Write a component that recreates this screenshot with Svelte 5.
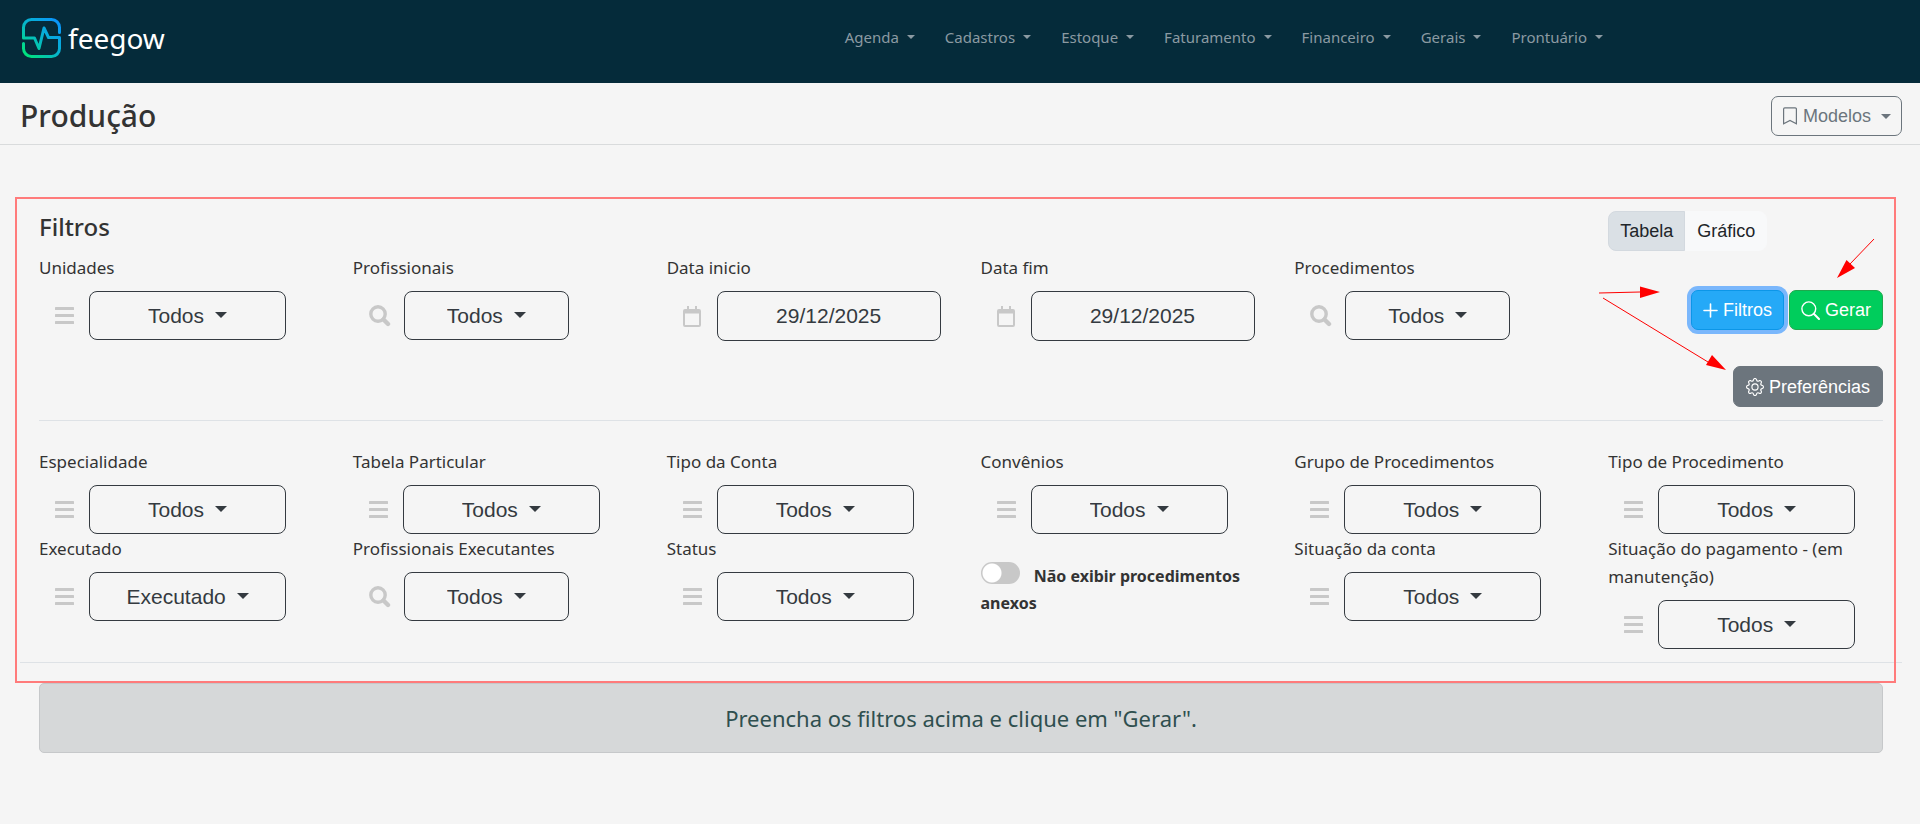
<script>
    const menus = ['Agenda', 'Cadastros', 'Estoque', 'Faturamento', 'Financeiro', 'Gerais', 'Prontuário'];

    let mainFilters = $state([
        { id: 'unidades', label: 'Unidades', icon: 'list', value: 'Todos' },
        { id: 'profissionais', label: 'Profissionais', icon: 'search', value: 'Todos' },
        { id: 'data-inicio', label: 'Data inicio', icon: 'calendar', value: '29/12/2025' },
        { id: 'data-fim', label: 'Data fim', icon: 'calendar', value: '29/12/2025' },
        { id: 'procedimentos', label: 'Procedimentos', icon: 'search', value: 'Todos' }
    ]);

    let extraFilters = $state([
        { id: 'especialidade', label: 'Especialidade', icon: 'list', value: 'Todos' },
        { id: 'tabela-particular', label: 'Tabela Particular', icon: 'list', value: 'Todos' },
        { id: 'tipo-conta', label: 'Tipo da Conta', icon: 'list', value: 'Todos' },
        { id: 'convenios', label: 'Convênios', icon: 'list', value: 'Todos' },
        { id: 'grupo-procedimentos', label: 'Grupo de Procedimentos', icon: 'list', value: 'Todos' },
        { id: 'tipo-procedimento', label: 'Tipo de Procedimento', icon: 'list', value: 'Todos' },
        { id: 'executado', label: 'Executado', icon: 'list', value: 'Executado' },
        { id: 'executantes', label: 'Profissionais Executantes', icon: 'search', value: 'Todos' },
        { id: 'status', label: 'Status', icon: 'list', value: 'Todos' },
        { id: 'anexos', label: 'Não exibir procedimentos anexos', icon: 'switch' },
        { id: 'situacao-conta', label: 'Situação da conta', icon: 'list', value: 'Todos' },
        { id: 'situacao-pagamento', label: 'Situação do pagamento - (em manutenção)', icon: 'list', value: 'Todos' }
    ]);

    let view = $state('tabela');
    let hideAttached = $state(false);
</script>

{#snippet field(filter)}
    <div class="field">
        <label for={filter.id}>{filter.label}</label>
        <div class="control">
            <span class="field-icon">
                {#if filter.icon === 'list'}
                    <svg width="19" height="17" viewBox="0 0 19 17" fill="currentColor">
                        <rect width="19" height="3" rx="0.5" />
                        <rect y="7" width="19" height="3" rx="0.5" />
                        <rect y="14" width="19" height="3" rx="0.5" />
                    </svg>
                {:else if filter.icon === 'search'}
                    <svg width="22" height="22" viewBox="0 0 22 22" fill="none" stroke="currentColor">
                        <circle cx="9" cy="9" r="7.2" stroke-width="3.4" />
                        <path d="M14.5 14.5L19 19" stroke-width="4.4" stroke-linecap="round" />
                    </svg>
                {:else}
                    <svg width="18" height="21" viewBox="0 0 18 21" fill="currentColor">
                        <path
                            fill-rule="evenodd"
                            d="M4 0h2v3h6V0h2v3h2a2 2 0 0 1 2 2v14a2 2 0 0 1-2 2H2a2 2 0 0 1-2-2V5a2 2 0 0 1 2-2h2zM2 7.5v11.5h14V7.5z"
                        />
                    </svg>
                {/if}
            </span>
            {#if filter.icon === 'calendar'}
                <input class="date" type="text" id={filter.id} bind:value={filter.value} />
            {:else}
                <div class="select" class:short={filter.icon === 'search'}>
                    <select id={filter.id}>
                        <option>{filter.value}</option>
                    </select>
                    <span class="caret"></span>
                </div>
            {/if}
        </div>
    </div>
{/snippet}

<header>
    <a href="#inicio" class="logo">
        <svg width="39" height="40" viewBox="0 0 39 40" fill="none">
            <defs>
                <linearGradient id="brand" x1="2" y1="38" x2="37" y2="2" gradientUnits="userSpaceOnUse">
                    <stop offset="0" stop-color="#00e676" />
                    <stop offset="0.5" stop-color="#06b4cc" />
                    <stop offset="1" stop-color="#0a93ff" />
                </linearGradient>
            </defs>
            <path
                d="M37.5 14.5V9.5A8 8 0 0 0 29.5 1.5H9.5A8 8 0 0 0 1.5 9.5V20H12.5L17 30.5L22 10L26.5 19.5H37.5V30.5A8 8 0 0 1 29.5 38.5H9.5A8 8 0 0 1 1.5 30.5V25.5"
                stroke="url(#brand)"
                stroke-width="3"
                stroke-linecap="round"
                stroke-linejoin="round"
            />
        </svg>
        <span>feegow</span>
    </a>
    <nav>
        {#each menus as menu}
            <a href="#{menu}">{menu}<span class="caret"></span></a>
        {/each}
    </nav>
</header>

<div class="title-bar">
    <h1>Produção</h1>
    <button class="btn outline">
        <svg width="16" height="18" viewBox="0 0 16 18" fill="none" stroke="currentColor" stroke-width="1.2">
            <path d="M1.6 16.8V2A1.2 1.2 0 0 1 2.8 .8H13.2A1.2 1.2 0 0 1 14.4 2V16.8L8 13.5Z" />
        </svg>
        Modelos
        <span class="caret"></span>
    </button>
</div>

<main>
    <section class="panel">
        <div class="grid top">
            <h2>Filtros</h2>
            {#each mainFilters as filter (filter.id)}
                {@render field(filter)}
            {/each}
            <div class="actions">
                <div class="toggle">
                    <button class:active={view === 'tabela'} onclick={() => (view = 'tabela')}>Tabela</button>
                    <button class:active={view === 'grafico'} onclick={() => (view = 'grafico')}>Gráfico</button>
                </div>
                <div class="buttons">
                    <button class="btn blue">
                        <svg width="15" height="15" viewBox="0 0 15 15" stroke="currentColor" stroke-width="1.6" stroke-linecap="round">
                            <path d="M7.5 1V14M1 7.5H14" />
                        </svg>
                        Filtros
                    </button>
                    <button class="btn green">
                        <svg width="19" height="19" viewBox="0 0 19 19" fill="none" stroke="currentColor" stroke-width="1.4" stroke-linecap="round">
                            <circle cx="7.8" cy="7.8" r="6.9" />
                            <path d="M12.8 12.8L18 18" stroke-width="2" />
                        </svg>
                        Gerar
                    </button>
                </div>
                <button class="btn gray">
                    <svg width="18" height="18" viewBox="0 0 16 16" fill="currentColor">
                        <path d="M8 4.754a3.246 3.246 0 1 0 0 6.492 3.246 3.246 0 0 0 0-6.492zM5.754 8a2.246 2.246 0 1 1 4.492 0 2.246 2.246 0 0 1-4.492 0z" />
                        <path d="M9.796 1.343c-.527-1.79-3.065-1.79-3.592 0l-.094.319a.873.873 0 0 1-1.255.52l-.292-.16c-1.64-.892-3.433.902-2.54 2.541l.159.292a.873.873 0 0 1-.52 1.255l-.319.094c-1.79.527-1.79 3.065 0 3.592l.319.094a.873.873 0 0 1 .52 1.255l-.16.292c-.892 1.64.901 3.434 2.541 2.54l.292-.159a.873.873 0 0 1 1.255.52l.094.319c.527 1.79 3.065 1.79 3.592 0l.094-.319a.873.873 0 0 1 1.255-.52l.292.16c1.64.893 3.434-.902 2.54-2.541l-.159-.292a.873.873 0 0 1 .52-1.255l.319-.094c1.79-.527 1.79-3.065 0-3.592l-.319-.094a.873.873 0 0 1-.52-1.255l.16-.292c.893-1.64-.902-3.433-2.541-2.54l-.292.159a.873.873 0 0 1-1.255-.52l-.094-.319zm-2.633.283c.246-.835 1.428-.835 1.674 0l.094.319a1.873 1.873 0 0 0 2.693 1.115l.291-.16c.764-.415 1.6.42 1.184 1.185l-.159.292a1.873 1.873 0 0 0 1.116 2.692l.318.094c.835.246.835 1.428 0 1.674l-.319.094a1.873 1.873 0 0 0-1.115 2.693l.16.291c.415.764-.42 1.6-1.185 1.184l-.291-.159a1.873 1.873 0 0 0-2.693 1.116l-.094.318c-.246.835-1.428.835-1.674 0l-.094-.319a1.873 1.873 0 0 0-2.692-1.115l-.292.16c-.764.415-1.6-.42-1.184-1.185l.159-.291A1.873 1.873 0 0 0 1.945 8.93l-.319-.094c-.835-.246-.835-1.428 0-1.674l.319-.094A1.873 1.873 0 0 0 3.06 4.377l-.16-.292c-.415-.764.42-1.6 1.185-1.184l.292.159a1.873 1.873 0 0 0 2.692-1.115l.094-.319z" />
                    </svg>
                    Preferências
                </button>
            </div>
        </div>

        <hr class="inner" />

        <div class="grid">
            {#each extraFilters as filter (filter.id)}
                {#if filter.icon === 'switch'}
                    <div class="switch">
                        <input type="checkbox" id={filter.id} bind:checked={hideAttached} />
                        <label for={filter.id}>{filter.label}</label>
                    </div>
                {:else}
                    {@render field(filter)}
                {/if}
            {/each}
        </div>

        <hr />

        <!-- red highlight and arrows over the filter area -->
        <div class="highlight"></div>
        <svg class="arrows" width="300" height="150" viewBox="0 0 300 150" fill="red" stroke="red">
            <path d="M9 63L50 62M13 68L118 132M284 9L260 34" stroke-width="1" />
            <path d="M50 56.5L70 62L50 68ZM122 125L136 140L116 135ZM256.5 30L247 48L265 38Z" stroke="none" />
        </svg>
    </section>

    <div class="alert">Preencha os filtros acima e clique em "Gerar".</div>
</main>

<style>
    :global(body) {
        margin: 0;
        background: #f5f5f5;
        color: #333;
        font-family: "Noto Sans", "Open Sans", sans-serif;
    }

    header {
        display: flex;
        justify-content: space-between;
        align-items: flex-start;
        height: 83px;
        padding: 0 302px 0 22px;
        box-sizing: border-box;
        background: #052b3a;
    }

    .logo {
        display: flex;
        align-items: center;
        gap: 7px;
        padding-top: 18px;
        color: #fff;
        font-size: 28px;
        line-height: 40px;
        text-decoration: none;
    }

    nav {
        display: flex;
        padding-top: 25px;
    }

    nav a {
        display: flex;
        align-items: center;
        gap: 8px;
        padding: 0 15px;
        color: #8b9aa2;
        font-size: 15px;
        line-height: 24px;
        text-decoration: none;
    }

    .caret {
        border: 6px solid transparent;
        border-top-color: currentColor;
        border-bottom: 0;
    }

    nav .caret {
        border-width: 4px;
        border-bottom: 0;
    }

    .title-bar {
        display: flex;
        justify-content: space-between;
        align-items: center;
        padding: 13px 18px 8px 20px;
        border-bottom: 1px solid #d9dbdc;
    }

    h1 {
        margin: 0;
        font-size: 30px;
        font-weight: 500;
        line-height: 40px;
    }

    .btn {
        display: flex;
        align-items: center;
        gap: 5px;
        height: 40px;
        padding: 0 11px;
        border: 1px solid;
        border-radius: 7px;
        color: #fff;
        font: 18px/24px "Liberation Sans", Arial, sans-serif;
        cursor: pointer;
    }

    .outline {
        padding: 0 10px;
        border-color: #6c757d;
        background: none;
        color: #6c757d;
    }

    .outline .caret {
        border-width: 5px;
        border-bottom: 0;
        margin-left: 5px;
    }

    .blue {
        border-color: #0c96e8;
        background: #25a9f7;
        box-shadow: 0 0 0 4px #7ab7fc;
    }

    .green {
        border-color: #1fa84c;
        background: #00cd5c;
    }

    .gray {
        height: 41px;
        padding: 0 12px;
        border-color: #6c757d;
        background: #6c757d;
    }

    .panel {
        position: relative;
        margin: 52px 18px 0 20px;
        padding: 14px 0 20px;
    }

    .grid {
        display: grid;
        grid-template-columns: repeat(6, minmax(0, 1fr));
        column-gap: 39px;
        row-gap: 1px;
        margin: 0 19px;
    }

    .top {
        grid-template-rows: 34px auto;
        row-gap: 9px;
    }

    h2 {
        grid-column: 1 / 6;
        margin: 0;
        font-size: 24px;
        font-weight: 500;
        line-height: 32px;
    }

    .field label {
        display: block;
        margin-bottom: 9px;
        font-size: 17px;
        line-height: 28px;
    }

    .control {
        display: flex;
        align-items: center;
    }

    .field-icon {
        display: flex;
        flex: none;
        width: 34px;
        padding-left: 16px;
        color: #c8c8c8;
    }

    .select,
    .date {
        box-sizing: border-box;
        height: 49px;
        border: 1px solid #343a40;
        border-radius: 8px;
        background: none;
        color: #343a40;
        font: 21px/30px "Liberation Sans", Arial, sans-serif;
    }

    .select {
        display: flex;
        justify-content: center;
        align-items: center;
        gap: 10px;
        width: 197px;
    }

    .select .caret {
        margin-bottom: 2px;
    }

    .short {
        width: 165px;
        margin-left: 1px;
    }

    select {
        appearance: none;
        padding: 0;
        border: 0;
        background: none;
        color: inherit;
        font: inherit;
        cursor: pointer;
    }

    .date {
        width: 224px;
        height: 50px;
        padding: 0;
        text-align: center;
    }

    .actions {
        grid-area: 1 / 6 / 3 / 7;
        display: flex;
        flex-direction: column;
        align-items: flex-end;
    }

    .toggle {
        display: flex;
        align-self: flex-start;
    }

    .toggle button {
        height: 40px;
        padding: 0 11px;
        border: 1px solid #f8f9fa;
        border-radius: 0 8px 8px 0;
        background: #f8f9fa;
        color: #212529;
        font: 18px/24px "Liberation Sans", Arial, sans-serif;
    }

    .toggle button:first-child {
        border-radius: 8px 0 0 8px;
    }

    .toggle .active {
        border-color: #d3d9df;
        background: #dae0e5;
    }

    .buttons {
        display: flex;
        gap: 5px;
        margin: 39px 0 36px;
    }

    hr {
        height: 1px;
        margin: 13px 0 0;
        border: 0;
        background: #dee2e6;
    }

    .inner {
        margin: 13px 19px 27px;
    }

    .switch {
        padding-top: 27px;
        font-size: 16px;
        font-weight: 700;
        line-height: 27px;
    }

    .switch input {
        appearance: none;
        width: 39px;
        height: 22px;
        margin: 0 10px 0 0;
        border-radius: 11px;
        background: radial-gradient(circle at 11px 11px, #fff 9px, #c8c8c8 10px);
        vertical-align: -2px;
    }

    .switch input:checked {
        background: radial-gradient(circle at 28px 11px, #fff 9px, #25a9f7 10px);
    }

    .highlight {
        position: absolute;
        inset: 0 6px 0 -5px;
        border: 2px solid #ff7b7b;
        pointer-events: none;
    }

    .arrows {
        position: absolute;
        top: 33px;
        right: 12px;
        pointer-events: none;
    }

    .alert {
        margin: 0 37px 0 39px;
        padding: 18px;
        border: 1px solid #c6c8ca;
        border-radius: 5px;
        background: #d6d8d9;
        color: #2f4f4f;
        font-size: 22px;
        line-height: 32px;
        text-align: center;
    }
</style>
